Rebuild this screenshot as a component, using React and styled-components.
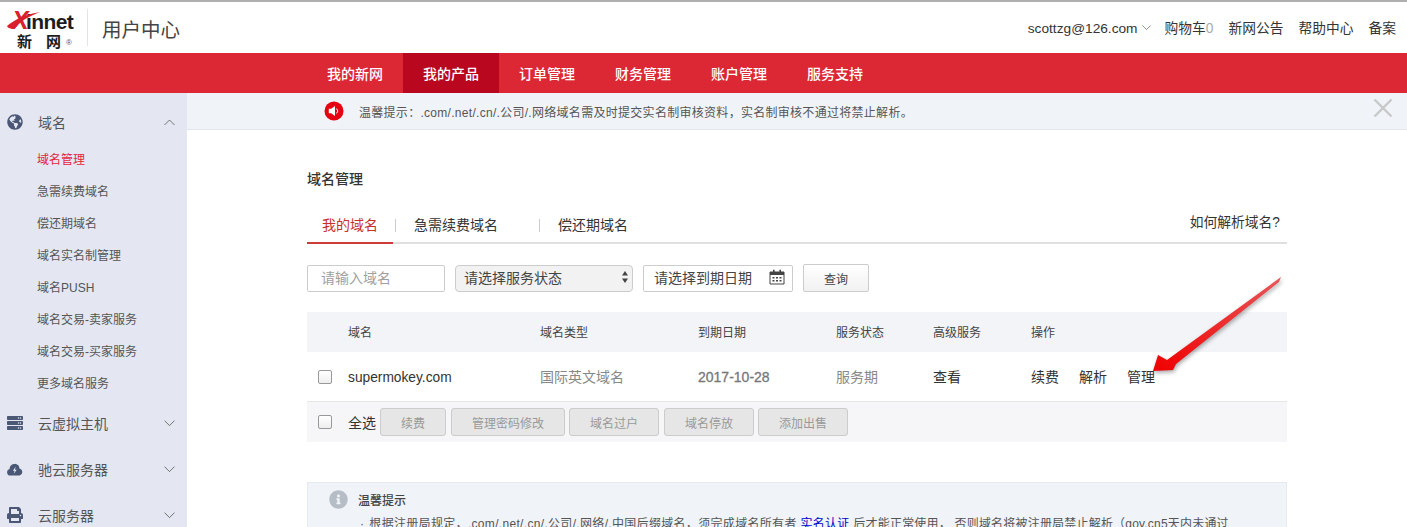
import React from "react";
import styled, { createGlobalStyle } from "styled-components";
import { FaGlobeAmericas, FaServer, FaPrint, FaInfoCircle } from "react-icons/fa";

const Global = createGlobalStyle`
  html, body { margin: 0; padding: 0; background: #fff; }
  body { font-family: "Liberation Sans", "Noto Sans CJK SC", sans-serif; color: #333; }
  * { box-sizing: border-box; }
`;
const Page = styled.div`position: relative; width: 1407px; height: 527px; overflow: hidden; border-top: 2px solid #aeaeae;`;
const Header = styled.header`display: flex; align-items: center; height: 51px; padding: 0 11px 0 8px;`;
const Logo = styled.div`position: relative; width: 66px; height: 37px; margin-top: 1px; color: #1d1d1d;`;
const LogoTop = styled.div`font: bold 21px/20px "Liberation Sans", sans-serif; letter-spacing: -.6px; white-space: nowrap;`;
const LogoX = styled.span`color: #d9202c; font-style: italic; font-size: 25px; margin-left: 4px; margin-right: -2px;`;
const LogoBottom = styled.div`display: flex; align-items: flex-end; gap: 14px; padding-left: 9px; margin-top: 1px; font: 700 15px/15px "Noto Sans CJK SC", sans-serif;`;
const LogoMark = styled.span`font: 8px/10px "Liberation Sans", sans-serif; margin-left: -9px; color: #555;`;
const Swoosh = styled.svg`position: absolute; left: -1px; top: 1px;`;
const Divider = styled.div`width: 1px; height: 37px; background: #e4e4e4; margin: 0 14px 0 13px;`;
const Brand = styled.div`font: 19.5px/1 "Noto Sans CJK SC", sans-serif; color: #444; margin-top: 2px;`;
const TopLinks = styled.nav`margin-left: auto; display: flex; align-items: center; gap: 15px; font-size: 13.75px; color: #333; margin-top: -2px;`;
const UserLink = styled.span`display: flex; align-items: center; gap: 4px; padding-top: 3px; margin-right: -1px; font-size: 13.7px;`;
const Muted = styled.span`color: #aaa;`;
const NavBar = styled.nav`display: flex; height: 40px; background: #dc2735; padding-left: 307px;`;
const NavItem = styled.a`width: 96px; display: flex; align-items: center; justify-content: center; color: #fff; font: 500 14px/1 "Noto Sans CJK SC", sans-serif; background: ${p => p.$active ? "#b8071f" : "transparent"};`;
const Body = styled.div`display: flex; height: 434px;`;
const Side = styled.aside`width: 187px; flex: none; background: #e4e7f1; padding-top: 7px;`;
const Group = styled.div`display: flex; align-items: center; height: ${p => p.$h || 46}px; padding: 0 12px 0 7px; color: #555; font-size: 14px;`;
const GroupIcon = styled.span`width: 31px; display: flex; color: #4b5875; font-size: 16px;`;
const GroupLabel = styled.span`flex: 1;`;
const SubList = styled.div`margin-top: -2px; padding-bottom: 2px;`;
const SubItem = styled.a`display: flex; align-items: center; height: 32px; padding-left: 37px; font-size: 12px; color: ${p => p.$active ? "#e3243b" : "#555"};`;
const Main = styled.main`flex: 1; min-width: 0;`;
const Notice = styled.div`position: relative; display: flex; align-items: center; height: 37px; background: #f0f4f9; border-bottom: 1px solid #e2e5ea; padding-left: 138px; gap: 15px; font-size: 12px; color: #555; letter-spacing: .29px;`;
const Close = styled.svg`position: absolute; right: 14px; top: 5px;`;
const Content = styled.div`width: 980px; margin-left: 120px;`;
const Title = styled.h2`margin: 39px 0 0; font: 500 14px/18px "Noto Sans CJK SC", sans-serif; color: #333;`;
const Tabs = styled.div`display: flex; align-items: center; height: 42px; margin-top: 15px; border-bottom: 2px solid #e0e0e0; font-size: 14px; color: #333;`;
const Tab = styled.a`display: flex; align-items: center; justify-content: ${p => p.$active ? "center" : "flex-start"}; height: 42px; margin-bottom: -2px; padding: 3px 0 0 ${p => p.$active ? 0 : 18}px; color: ${p => p.$active ? "#c9302c" : "#333"}; border-bottom: 2px solid ${p => p.$active ? "#cf3b38" : "transparent"}; width: ${p => p.$w}px;`;
const TabSep = styled.span`width: 1px; height: 13px; background: #ccc; margin: 7px 0 0 ${p => p.$ml || 0}px;`;
const Help = styled.a`margin-left: auto; margin-right: 7px; margin-top: -2px; font-size: 13.75px;`;
const Filters = styled.form`display: flex; align-items: flex-start; gap: 10px; margin-top: 20px; height: 48px;`;
const TextInput = styled.input`width: 138px; height: 27px; margin-top: 1px; border: 1px solid #ccc; border-radius: 2px; padding: 0 13px 4px; font: 14px "Noto Sans CJK SC", sans-serif; outline: none; &::placeholder { color: #a0a0a0; }`;
const Select = styled.div`display: flex; align-items: center; justify-content: space-between; width: 178px; height: 27px; margin-top: 1px; padding: 0 2px 3px 8px; background: #f2f2f2; border: 1px solid #ccc; border-radius: 4px; font-size: 14px; color: #444;`;
const DateBox = styled.div`display: flex; align-items: center; justify-content: space-between; width: 150px; height: 27px; margin-top: 1px; padding: 0 7px 3px 10px; border: 1px solid #ccc; border-radius: 2px; font-size: 14px; color: #444;`;
const Query = styled.button`width: 66px; height: 28px; border: 1px solid #ccc; border-radius: 2px; background: linear-gradient(#fff, #f1f1f1); font: 12px "Noto Sans CJK SC", sans-serif; color: #444;`;
const Row = styled.div`display: grid; grid-template-columns: 41px 192px 158px 138px 97px 98px 1fr; align-items: center; height: ${p => p.$h}px; padding-bottom: ${p => p.$pb || 0}px; background: ${p => p.$bg || "transparent"}; font-size: ${p => p.$fs || 14}px; color: #444; border-bottom: ${p => p.$line ? "1px solid #e6e6e6" : "0"};`;
const Gray = styled.span`color: #888; margin-bottom: 2px;`;
const Dark = styled.span`color: #333; margin-bottom: 2px;`;
const Domain = styled.span`color: #333; font-size: 13.75px; margin-top: 2px;`;
const DateText = styled.span`color: #777; -webkit-text-stroke: .3px #777;`;
const Ops = styled.div`display: flex; gap: 20px; color: #333; margin-bottom: 2px;`;
const Check = styled.input.attrs({ type: "checkbox" })`appearance: none; margin: 0 0 0 11px; width: 14px; height: 14px; border: 1px solid #999; border-radius: 2px; background: linear-gradient(#fff, #eee); flex: none;`;
const Bulk = styled.div`display: flex; align-items: center; height: 40px; background: #f6f6f9; font-size: 14px; color: #333;`;
const BulkLabel = styled.span`margin-left: 16px; margin-right: 4px;`;
const BulkBtn = styled.button`width: ${p => p.$w}px; height: 28px; margin-right: ${p => p.$mr ?? 4}px; border: 1px solid #ccc; border-radius: 3px; background: #e6e6e6; color: #999; font: 12px "Noto Sans CJK SC", sans-serif; padding: 0;`;
const Tips = styled.section`margin-top: 40px; height: 90px; background: #f0f4f9; border: 1px solid #e6e9ee; padding: 7px 0 0 21px; font-size: 12px; color: #555;`;
const TipHead = styled.div`display: flex; align-items: center; gap: 10px; font: 500 12px/18px "Noto Sans CJK SC", sans-serif; color: #444;`;
const TipIcon = styled.span`display: flex; color: #b6bdc6; font-size: 19px;`;
const TipLine = styled.p`margin: 6px 0 0 31px; line-height: 18px; white-space: nowrap; letter-spacing: .32px;`;
const TipBullet = styled.span`margin-right: 5px;`;
const TipTail = styled.span`letter-spacing: .2px;`;
const Blue = styled.a`color: #0000cc;`;
const Arrow = styled.svg`position: absolute; left: 1140px; top: 265px; filter: drop-shadow(1px 2px 2px rgba(0,0,0,.35));`;

const Chev = ({ up, size = 11 }) => (
  <svg width={size} height={size * 0.6} viewBox="0 0 11 6.6" fill="none" stroke="#555" strokeWidth=".8">
    <path d={up ? "M.5 6 5.5 1l5 5" : "M.5.6l5 5 5-5"} />
  </svg>
);
const CloudBolt = () => (
  <svg width="16" height="14" viewBox="0 0 16 14">
    <path fill="#4b5875" d="M3.4 13.6A3.3 3.3 0 0 1 2.6 7.1 4.8 4.8 0 0 1 8 2a1 1 0 0 1 1 0 4.7 4.7 0 0 1 3.4 4.6 3.6 3.6 0 0 1 .2 7z" />
    <path fill="#e4e7f1" d="M8.6 4.8 5.9 8.8h1.7l-.8 3 2.9-4.1H8z" />
  </svg>
);
const Speaker = () => (
  <svg width="20" height="20" viewBox="0 0 20 20" style={{ marginLeft: -1 }}>
    <circle cx="10" cy="10" r="9.5" fill="#e60012" />
    <path fill="#fff" d="M4.8 7.8h2.4L11 5v10L7.2 12.2H4.8z" />
    <path fill="none" stroke="#fff" strokeWidth="1" d="M12.6 7.6a3.3 3.3 0 0 1 0 4.8" />
  </svg>
);
const Calendar = () => (
  <svg width="16" height="16" viewBox="0 0 16 16">
    <path fill="none" stroke="#444" d="M1 3h14v12H1z" />
    <path fill="#444" d="M1 3h14v3H1zM4 .8h1.6V4H4zM10.4.8H12V4h-1.6zM3.5 8h2v1.5h-2zM7 8h2v1.5H7zM10.5 8h2v1.5h-2zM3.5 11h2v1.5h-2zM7 11h2v1.5H7zM10.5 11h2v1.5h-2z" />
  </svg>
);
const Updown = () => (
  <svg width="10" height="14" viewBox="0 0 10 14"><path fill="#444" d="M5 1l3 4.5H2zM5 13 2 8.5h6z" /></svg>
);

const nav = ["我的新网", "我的产品", "订单管理", "财务管理", "账户管理", "服务支持"];
const subs = ["域名管理", "急需续费域名", "偿还期域名", "域名实名制管理", "域名PUSH", "域名交易-卖家服务", "域名交易-买家服务", "更多域名服务"];
const bulk = [["续费", 66, 5], ["管理密码修改", 114, 4], ["域名过户", 90, 5], ["域名停放", 90, 4], ["添加出售", 90, 0]];

export default function App() {
  return (
    <Page>
      <Global />
      <Header>
        <Logo>
          <LogoTop><LogoX>X</LogoX>innet</LogoTop>
          <LogoBottom><span>新</span><span>网</span><LogoMark>®</LogoMark></LogoBottom>
          <Swoosh width="34" height="20" viewBox="0 0 34 20"><path fill="#d9202c" d="M0 15C8 8 20 3 33 1 23 5 13 10 9 16 5 18 1 18 0 15z" /></Swoosh>
        </Logo>
        <Divider />
        <Brand>用户中心</Brand>
        <TopLinks>
          <UserLink>scottzg@126.com <Chev size={9} /></UserLink>
          <span>购物车<Muted>0</Muted></span>
          <span>新网公告</span>
          <span>帮助中心</span>
          <span>备案</span>
        </TopLinks>
      </Header>
      <NavBar>{nav.map((n, i) => <NavItem key={n} $active={i === 1}>{n}</NavItem>)}</NavBar>
      <Body>
        <Side>
          <Group $h={44}><GroupIcon><FaGlobeAmericas /></GroupIcon><GroupLabel>域名</GroupLabel><Chev up /></Group>
          <SubList>{subs.map((s, i) => <SubItem key={s} $active={i === 0}>{s}</SubItem>)}</SubList>
          <Group><GroupIcon><FaServer /></GroupIcon><GroupLabel>云虚拟主机</GroupLabel><Chev /></Group>
          <Group><GroupIcon><CloudBolt /></GroupIcon><GroupLabel>驰云服务器</GroupLabel><Chev /></Group>
          <Group><GroupIcon><FaPrint /></GroupIcon><GroupLabel>云服务器</GroupLabel><Chev /></Group>
        </Side>
        <Main>
          <Notice>
            <Speaker />
            <span>温馨提示：.com/.net/.cn/.公司/.网络域名需及时提交实名制审核资料，实名制审核不通过将禁止解析。</span>
            <Close width="20" height="20" viewBox="0 0 20 20"><path stroke="#c8c8c8" strokeWidth="2.4" d="M1.5 1.5l17 17M18.5 1.5l-17 17" /></Close>
          </Notice>
          <Content>
            <Title>域名管理</Title>
            <Tabs>
              <Tab $active $w={86}>我的域名</Tab>
              <TabSep $ml={2} />
              <Tab $w={143}>急需续费域名</Tab>
              <TabSep />
              <Tab $w={108}>偿还期域名</Tab>
              <Help>如何解析域名?</Help>
            </Tabs>
            <Filters>
              <TextInput placeholder="请输入域名" />
              <Select><span>请选择服务状态</span><Updown /></Select>
              <DateBox><span>请选择到期日期</span><Calendar /></DateBox>
              <Query type="button">查询</Query>
            </Filters>
            <Row $h={40} $pb={2} $bg="#f3f4f8" $fs={12}>
              <span /><span>域名</span><span>域名类型</span><span>到期日期</span><span>服务状态</span><span>高级服务</span><span>操作</span>
            </Row>
            <Row $h={50} $line>
              <Check /><Domain>supermokey.com</Domain><Gray>国际英文域名</Gray><DateText>2017-10-28</DateText><Gray>服务期</Gray><Dark>查看</Dark>
              <Ops><span>续费</span><span>解析</span><span>管理</span></Ops>
            </Row>
            <Bulk>
              <Check />
              <BulkLabel>全选</BulkLabel>
              {bulk.map(([t, w, m]) => <BulkBtn key={t} type="button" $w={w} $mr={m}>{t}</BulkBtn>)}
            </Bulk>
            <Tips>
              <TipHead><TipIcon><FaInfoCircle /></TipIcon>温馨提示</TipHead>
              <TipLine><TipBullet>·</TipBullet>根据注册局规定，.com/.net/.cn/.公司/.网络/.中国后缀域名，须完成域名所有者 <Blue>实名认证</Blue> <TipTail>后才能正常使用， 否则域名将被注册局禁止解析（gov.cn5天内未通过</TipTail></TipLine>
            </Tips>
          </Content>
        </Main>
      </Body>
      <Arrow width="150" height="115" viewBox="1140 265 150 115">
        <defs><linearGradient id="ar" x1="1" y1="0" x2="0" y2="1"><stop offset="0" stopColor="#e8565a" /><stop offset="1" stopColor="#f00000" /></linearGradient></defs>
        <polygon fill="url(#ar)" points="1281,275 1279,280 1176,362 1173,368 1153,369 1158,353 1167,358" />
      </Arrow>
    </Page>
  );
}
